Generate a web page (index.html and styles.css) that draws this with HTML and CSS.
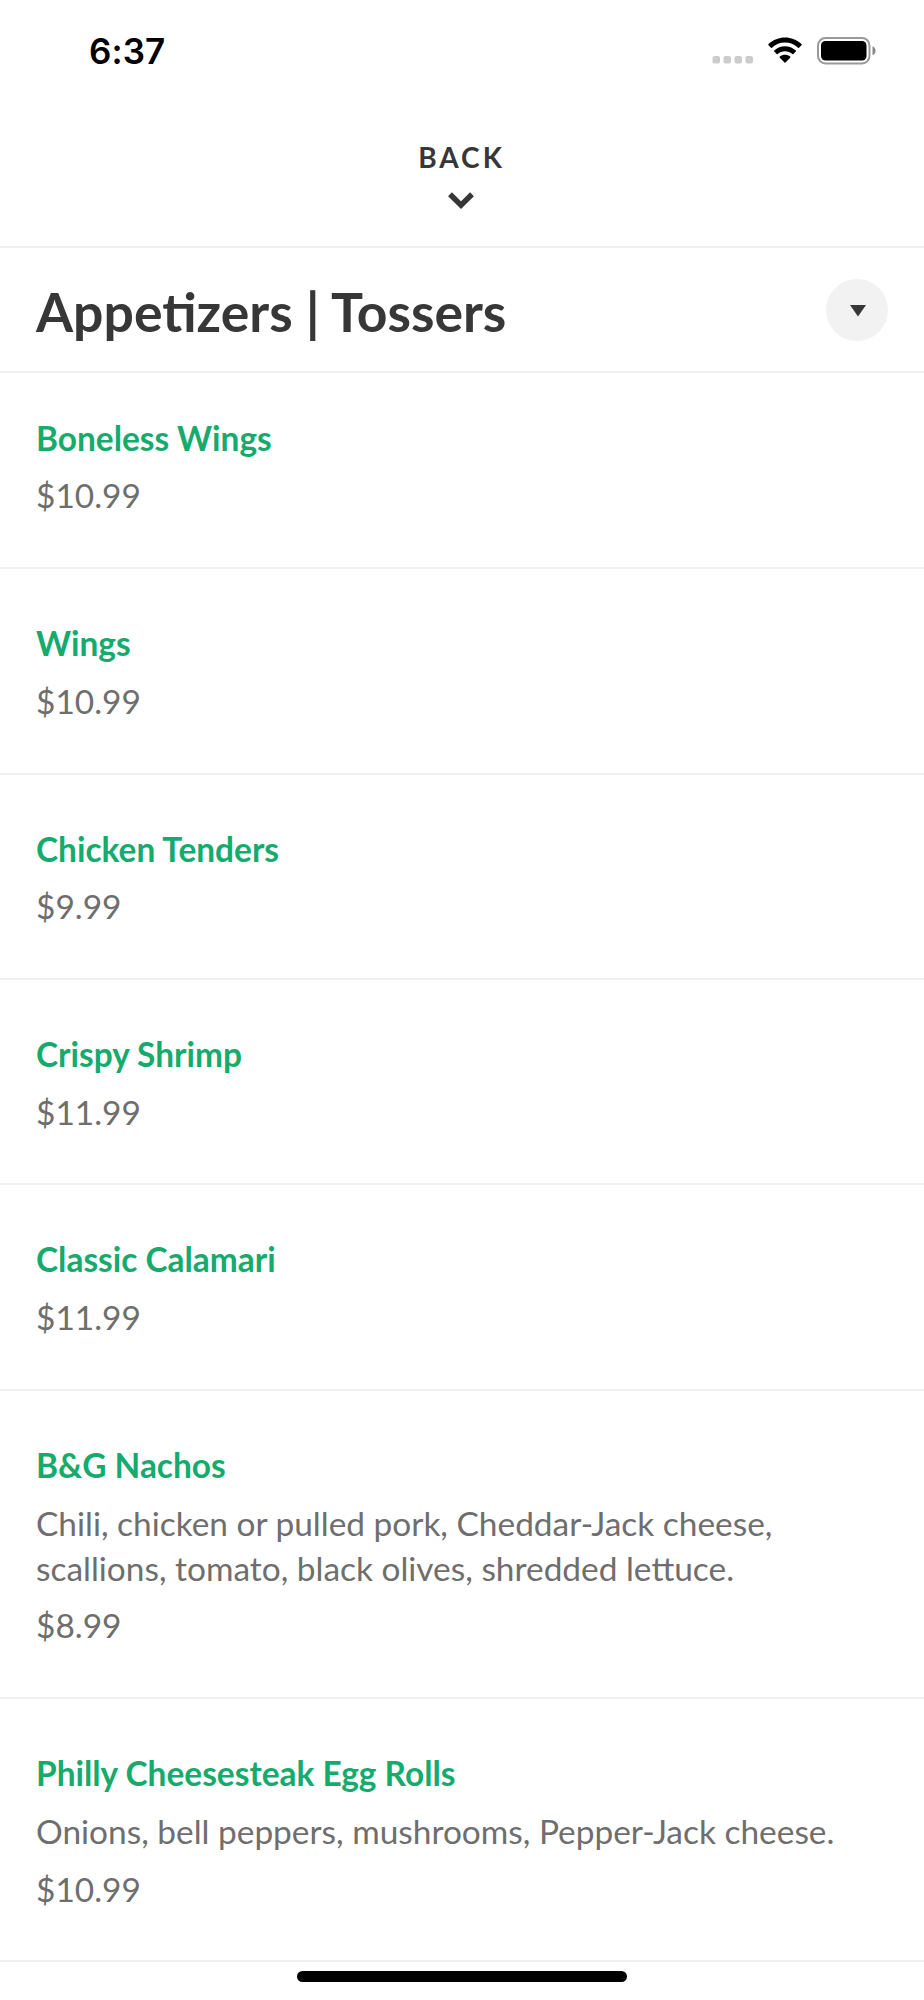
FILE: index.html
```html
<!DOCTYPE html>
<html lang="en">
<head>
<meta charset="utf-8">
<title>Menu</title>
<link rel="stylesheet" href="styles.css">
</head>
<body>
<div class="status">
<span class="time">6:37</span>
<div class="indicators">
<svg class="signal" width="42" height="8" viewBox="0 0 42 8"><g fill="#ccc"><rect x=".5" width="7.500" height="7.500" rx="2"/><rect x="11.500" width="7.500" height="7.500" rx="2"/><rect x="22.500" width="7.500" height="7.500" rx="2"/><rect x="33.500" width="7.500" height="7.500" rx="2"/></g></svg>
<svg class="wifi" width="36" height="27" viewBox="0 0 36 27"><path d="M18 5.500c5 0 9.500 1.900 13 5.200.3.300.7.300 1 0l2.500-2.500c.3-.3.300-.8 0-1.100C25.300-1.800 10.700-1.800 1.500 7.100c-.3.300-.3.800 0 1.100L4 10.700c.3.300.7.300 1 0C8.500 7.400 13 5.500 18 5.500z"/><path d="M18 14.300c2.700 0 5.300 1 7.300 2.800.3.300.7.300 1 0l2.500-2.500c.3-.3.300-.8 0-1.100-6.100-5.700-15.500-5.700-21.600 0-.3.300-.3.800 0 1.100l2.500 2.500c.3.300.7.300 1 0 2-1.800 4.600-2.800 7.300-2.800z"/><path d="M23.200 20.700c.3-.3.300-.8 0-1.100-2.900-2.500-7.500-2.500-10.400 0-.3.300-.3.800 0 1.100l4.700 4.800c.3.300.7.300 1 0z"/></svg>
<svg class="battery" width="60" height="28" viewBox="0 0 60 28"><rect x="1" y="1" width="51.500" height="25.500" rx="7.500" fill="none" stroke="#999" stroke-width="2"/><rect x="4" y="4" width="45.500" height="19.500" rx="4.500"/><path fill="#888" d="M55.500 9.300c4 1.500 4 7.500 0 9z"/></svg>
</div>
</div>
<header class="back">
<span class="back-label">BACK</span>
<svg width="26" height="17" viewBox="0 0 26 17"><path d="M2 2.200l11 10.900 11-10.900" fill="none" stroke="#373737" stroke-width="5.500"/></svg>
</header>
<div class="category">
<h1>Appetizers | Tossers</h1>
<div class="toggle"><svg width="16" height="12" viewBox="0 0 16 12"><path d="M0 0h16L8 11.500z" fill="#373737"/></svg></div>
</div>
<main>
<section class="item"><h2>Boneless Wings</h2><p>$10.99</p></section>
<section class="item"><h2>Wings</h2><p>$10.99</p></section>
<section class="item"><h2>Chicken Tenders</h2><p>$9.99</p></section>
<section class="item"><h2>Crispy Shrimp</h2><p>$11.99</p></section>
<section class="item"><h2>Classic Calamari</h2><p>$11.99</p></section>
<section class="item"><h2>B&amp;G Nachos</h2><p>Chili, chicken or pulled pork, Cheddar-Jack cheese,<br>scallions, tomato, black olives, shredded lettuce.</p><p>$8.99</p></section>
<section class="item"><h2>Philly Cheesesteak Egg Rolls</h2><p>Onions, bell peppers, mushrooms, Pepper-Jack cheese.</p><p>$10.99</p></section>
</main>
<div class="home"></div>
</body>
</html>
```
FILE: styles.css
```css
* { box-sizing: border-box; }
body { margin: 0; height: 2000px; overflow: hidden; background: #fff; font-family: Lato, sans-serif; color: #373737; position: relative; }
.status { height: 102px; padding: 0 47px 0 89px; display: flex; justify-content: space-between; }
.time { font: 600 35px/42px Inter, sans-serif; margin-top: 30px; color: #000; letter-spacing: 0.1px; }
.indicators { display: flex; align-items: flex-start; }
.signal { margin-top: 56px; }
.wifi { margin: 37px 0 0 13px; }
.battery { margin: 37px 0 0 14px; }
.back { height: 146px; border-bottom: 2px solid #f0f0f0; display: flex; flex-direction: column; align-items: center; padding-top: 38px; }
.back-label { font-size: 28px; line-height: 34px; font-weight: 700; letter-spacing: 3px; margin-right: 1px; }
.back svg { margin: 18px 3px 0 0; }
.category { height: 125px; border-bottom: 2px solid #f0f0f0; padding: 0 36px; display: flex; align-items: center; justify-content: space-between; }
h1 { margin: 2px 0 0; font-size: 53.5px; line-height: 64px; font-weight: 700; font-variant-ligatures: common-ligatures; }
.toggle { width: 62px; height: 62px; border-radius: 50%; background: #f2f2f2; display: flex; align-items: center; justify-content: center; }
.toggle svg { margin: 2px 0 0 2px; }
.item { padding: 52px 36px 48.6px; border-bottom: 2px solid #f0f0f0; }
.item:first-child { padding: 42.6px 36px 48.8px; }
.item h2 { margin: 0; font-size: 33.43px; line-height: 45px; font-weight: 700; color: #14ab6c; }
.item p { margin: 12.8px 0 0; font-size: 33.43px; line-height: 45px; color: #6e6e6e; }
.home { position: absolute; left: 297px; top: 1971px; width: 330px; height: 11px; border-radius: 6px; background: #000; }
```
